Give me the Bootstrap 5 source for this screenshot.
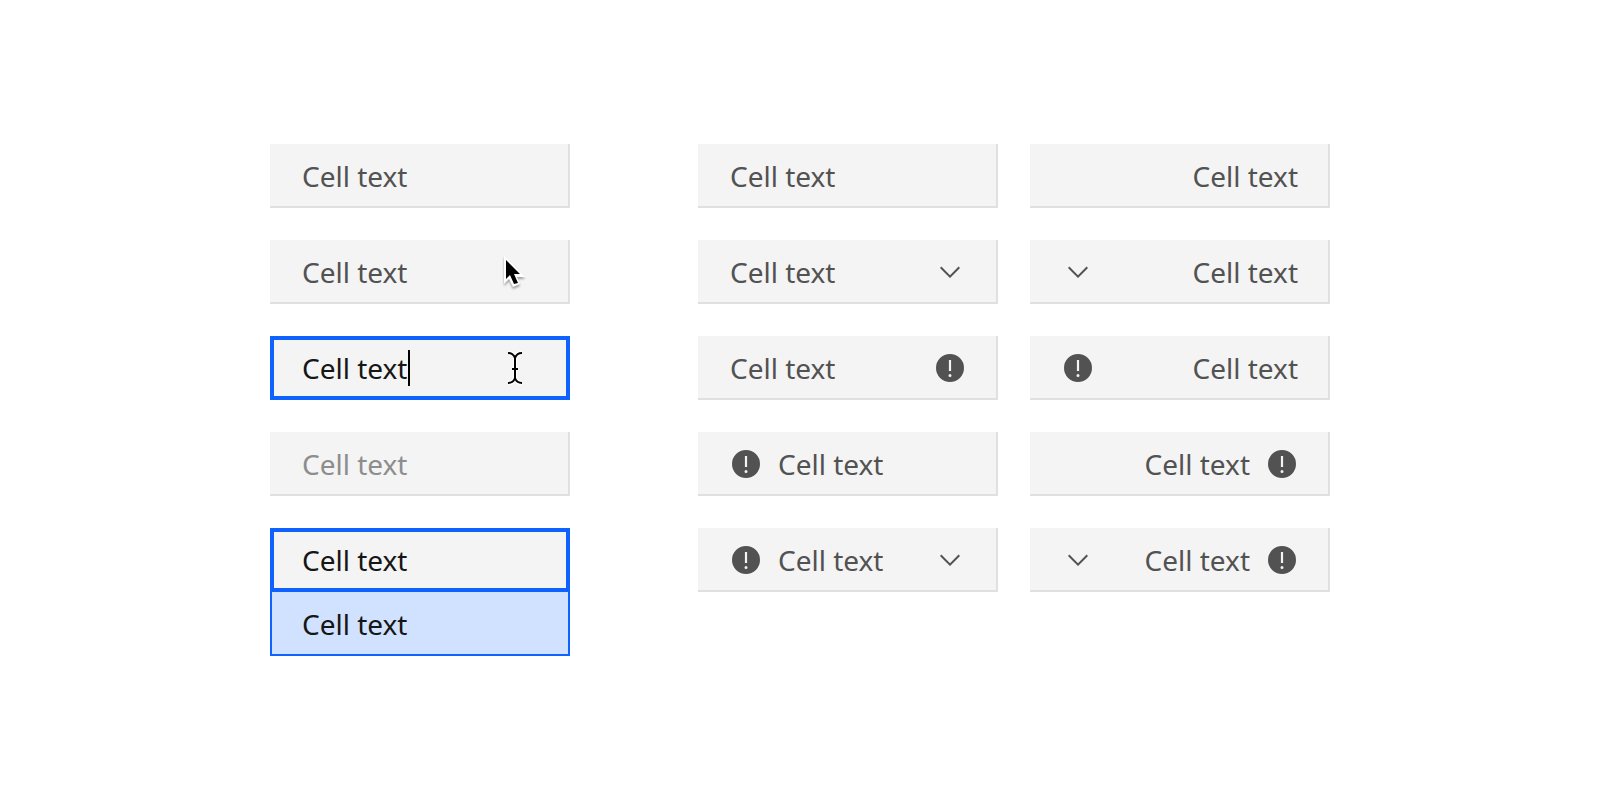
<!DOCTYPE html>
<html lang="en">
<head>
<meta charset="utf-8">
<meta name="viewport" content="width=device-width, initial-scale=1">
<title>Data cells</title>
<link href="https://cdn.jsdelivr.net/npm/bootstrap@5.3.0/dist/css/bootstrap.min.css" rel="stylesheet">
<style>
  body { font-family: "Noto Sans", "Open Sans", sans-serif; font-size: 28px; line-height: 36px; color: #525252; background: #fff; }
  .cell-board { display: grid; grid-template-columns: 300fr 632fr; column-gap: 128px; width: 100%; max-width: 1060px; }
  .cell-pairs { display: grid; grid-template-columns: 1fr 1fr; gap: 32px; align-content: start; }
  .cell-stack { display: grid; gap: 32px; align-content: start; }
  .data-cell { height: 64px; padding: 0 32px; background: #f4f4f4; box-shadow: inset -2px -2px 0 #e0e0e0; white-space: nowrap; }
  .cell-active { color: #161616; box-shadow: inset 0 0 0 4px #0f62fe; }
  .cell-picked { color: #161616; background: #d0e2ff; box-shadow: inset -2px -2px 0 #0f62fe, inset 2px 0 0 #0f62fe; }
  .cell-disabled { color: #8d8d8d; }
  .cell-input { width: 106px; color: inherit; outline: 0; }
  .caret-bar { width: 2px; height: 36px; background: #000; }
  .cell-icon { width: 32px; height: 32px; fill: #525252; flex: none; display: block; }
  .pointer { position: absolute; right: 40px; top: 8px; width: 32px; height: 48px; overflow: visible; }
  .arrow-shadow { filter: drop-shadow(0 2px 1px rgba(0, 0, 0, .35)); }
</style>
</head>
<body>
<svg class="d-none" aria-hidden="true">
  <symbol id="chevron" viewBox="0 0 32 32"><path d="M16 22 6 12 7.4 10.6 16 19.2 24.6 10.6 26 12Z"/></symbol>
  <symbol id="warning" viewBox="0 0 32 32"><path d="M16,2A14,14,0,1,0,30,16,14,14,0,0,0,16,2ZM14.9,8h2.2V19H14.9ZM16,25a1.5,1.5,0,1,1,1.5-1.5A1.5,1.5,0,0,1,16,25Z"/></symbol>
</svg>
<main class="min-vh-100 d-flex align-items-center justify-content-center">
  <div class="cell-board">
    <section class="cell-stack" aria-label="States">
      <div class="data-cell d-flex align-items-center">Cell text</div>
      <div class="data-cell d-flex align-items-center position-relative">Cell text
        <svg class="pointer arrow-shadow" viewBox="0 0 32 48" aria-hidden="true">
          <path d="M6 7V36L11 31L15 39L22 36L19 29H27Z" fill="#fff"/>
          <path d="M8 12V31L12 27L16 36L20 35L16 26H22Z"/>
        </svg>
      </div>
      <div class="data-cell cell-active d-flex align-items-center position-relative">
        <input class="cell-input border-0 p-0 bg-transparent" type="text" value="Cell text" aria-label="Cell value">
        <span class="caret-bar"></span>
        <svg class="pointer" viewBox="0 0 32 48" fill="none" aria-hidden="true">
          <path d="M10 9C14 9 16 11 17 14V34C16 37 14 39 10 39M24 9C20 9 18 11 17 14M17 34C18 37 20 39 24 39M14 25H20" stroke="#fff" stroke-width="4"/>
          <path d="M10 9C14 9 16 11 17 14V34C16 37 14 39 10 39M24 9C20 9 18 11 17 14M17 34C18 37 20 39 24 39M14 25H20" stroke="#000" stroke-width="2"/>
        </svg>
      </div>
      <div class="data-cell cell-disabled d-flex align-items-center" aria-disabled="true">Cell text</div>
      <div>
        <div class="data-cell cell-active d-flex align-items-center">Cell text</div>
        <div class="data-cell cell-picked d-flex align-items-center">Cell text</div>
      </div>
    </section>
    <section class="cell-pairs" aria-label="Alignment and icons">
      <div class="data-cell d-flex align-items-center">Cell text</div>
      <div class="data-cell d-flex align-items-center justify-content-end">Cell text</div>

      <div class="data-cell d-flex align-items-center justify-content-between">Cell text
        <button class="border-0 p-0 bg-transparent" type="button" aria-label="Open"><svg class="cell-icon"><use href="#chevron"/></svg></button>
      </div>
      <div class="data-cell d-flex align-items-center justify-content-between">
        <button class="border-0 p-0 bg-transparent" type="button" aria-label="Open"><svg class="cell-icon"><use href="#chevron"/></svg></button>Cell text
      </div>

      <div class="data-cell d-flex align-items-center justify-content-between">Cell text
        <svg class="cell-icon"><use href="#warning"/></svg>
      </div>
      <div class="data-cell d-flex align-items-center justify-content-between">
        <svg class="cell-icon"><use href="#warning"/></svg>Cell text
      </div>

      <div class="data-cell d-flex align-items-center gap-3">
        <svg class="cell-icon"><use href="#warning"/></svg>Cell text
      </div>
      <div class="data-cell d-flex align-items-center justify-content-end gap-3">Cell text
        <svg class="cell-icon"><use href="#warning"/></svg>
      </div>

      <div class="data-cell d-flex align-items-center gap-3">
        <svg class="cell-icon"><use href="#warning"/></svg>Cell text
        <button class="border-0 p-0 bg-transparent ms-auto" type="button" aria-label="Open"><svg class="cell-icon"><use href="#chevron"/></svg></button>
      </div>
      <div class="data-cell d-flex align-items-center gap-3">
        <button class="border-0 p-0 bg-transparent me-auto" type="button" aria-label="Open"><svg class="cell-icon"><use href="#chevron"/></svg></button>Cell text
        <svg class="cell-icon"><use href="#warning"/></svg>
      </div>
    </section>
  </div>
</main>
<script src="https://cdn.jsdelivr.net/npm/bootstrap@5.3.0/dist/js/bootstrap.bundle.min.js"></script>
</body>
</html>
